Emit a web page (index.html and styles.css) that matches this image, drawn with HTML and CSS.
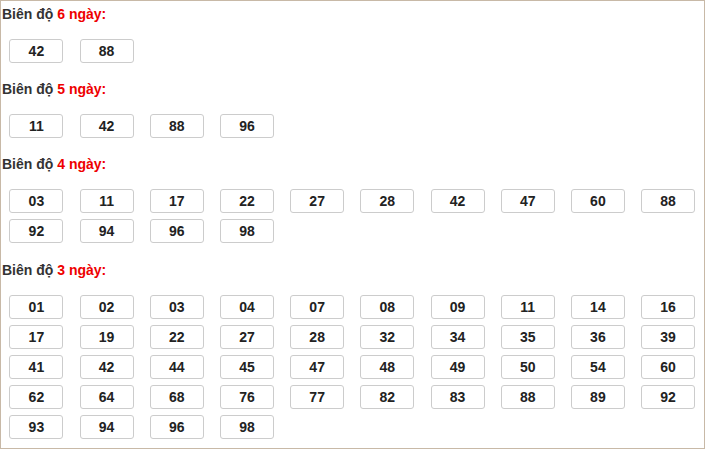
FILE: index.html
```html
<!DOCTYPE html>
<html>
<head>
<meta charset="utf-8">
<link rel="stylesheet" href="styles.css">
</head>
<body>
<div class="panel">
  <section class="group">
    <h3 class="title">Biên độ <span class="hl">6 ngày:</span></h3>
    <div class="nums">
      <span class="num">42</span><span class="num">88</span>
    </div>
  </section>
  <section class="group">
    <h3 class="title">Biên độ <span class="hl">5 ngày:</span></h3>
    <div class="nums">
      <span class="num">11</span><span class="num">42</span><span class="num">88</span><span class="num">96</span>
    </div>
  </section>
  <section class="group">
    <h3 class="title">Biên độ <span class="hl">4 ngày:</span></h3>
    <div class="nums">
      <span class="num">03</span><span class="num">11</span><span class="num">17</span><span class="num">22</span><span class="num">27</span><span class="num">28</span><span class="num">42</span><span class="num">47</span><span class="num">60</span><span class="num">88</span>
      <span class="num">92</span><span class="num">94</span><span class="num">96</span><span class="num">98</span>
    </div>
  </section>
  <section class="group">
    <h3 class="title">Biên độ <span class="hl">3 ngày:</span></h3>
    <div class="nums">
      <span class="num">01</span><span class="num">02</span><span class="num">03</span><span class="num">04</span><span class="num">07</span><span class="num">08</span><span class="num">09</span><span class="num">11</span><span class="num">14</span><span class="num">16</span>
      <span class="num">17</span><span class="num">19</span><span class="num">22</span><span class="num">27</span><span class="num">28</span><span class="num">32</span><span class="num">34</span><span class="num">35</span><span class="num">36</span><span class="num">39</span>
      <span class="num">41</span><span class="num">42</span><span class="num">44</span><span class="num">45</span><span class="num">47</span><span class="num">48</span><span class="num">49</span><span class="num">50</span><span class="num">54</span><span class="num">60</span>
      <span class="num">62</span><span class="num">64</span><span class="num">68</span><span class="num">76</span><span class="num">77</span><span class="num">82</span><span class="num">83</span><span class="num">88</span><span class="num">89</span><span class="num">92</span>
      <span class="num">93</span><span class="num">94</span><span class="num">96</span><span class="num">98</span>
    </div>
  </section>
</div>
</body>
</html>
```

FILE: styles.css
```css
html, body {
  margin: 0;
  padding: 0;
  background: #fff;
}
body {
  font-family: "Liberation Sans", Arial, sans-serif;
}
.panel {
  box-sizing: border-box;
  width: 705px;
  height: 449px;
  border: 1px solid #c8b9a7;
  padding: 3px 0 0 0;
  display: flex;
  flex-direction: column;
  gap: 16px;
}
.group {
  display: flex;
  flex-direction: column;
  gap: 15px;
}
.group:last-child {
  margin-top: 1px;
}
.title {
  margin: 0;
  padding-left: 1px;
  font-size: 14px;
  line-height: 20px;
  font-weight: bold;
  color: #333;
}
.hl {
  color: #ee0000;
}
.nums {
  display: grid;
  grid-template-columns: repeat(10, 70.2px);
  row-gap: 6px;
  padding-left: 8.4px;
}
.num {
  box-sizing: border-box;
  width: 54px;
  height: 24px;
  border: 1px solid #cccccc;
  border-radius: 3px;
  display: flex;
  align-items: center;
  justify-content: center;
  font-size: 14px;
  font-weight: bold;
  color: #222;
}
```
